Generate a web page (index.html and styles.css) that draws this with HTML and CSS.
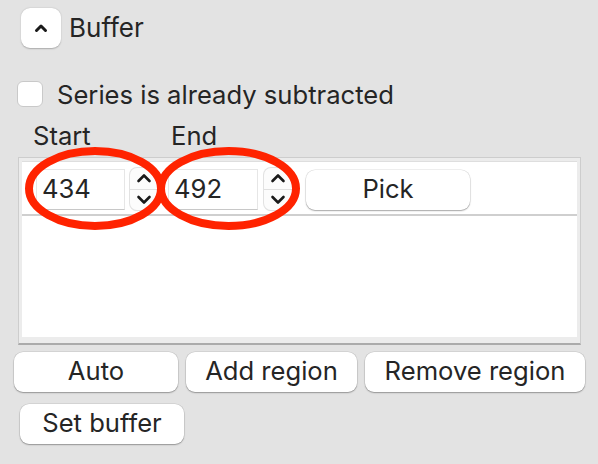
FILE: index.html
```html
<!DOCTYPE html>
<html>
<head>
<meta charset="utf-8">
<link rel="stylesheet" href="styles.css">
</head>
<body>
<div class="panel">
  <div class="header">
    <button class="collapse"><svg width="14" height="10" viewBox="0 0 14 10"><path d="M2.5 7.5 L7 3 L11.5 7.5" fill="none" stroke="#1a1a1a" stroke-width="3" stroke-linecap="round" stroke-linejoin="round"/></svg></button>
    <span class="title">Buffer</span>
  </div>
  <label class="check-row">
    <span class="checkbox"></span>
    <span>Series is already subtracted</span>
  </label>
  <div class="col-labels">
    <span class="lbl-start">Start</span>
    <span class="lbl-end">End</span>
  </div>
  <div class="frame">
    <div class="list">
      <div class="row">
        <div class="spin first">
          <div class="field f1">434</div>
          <div class="stepper s1">
            <svg width="16" height="10" viewBox="0 0 16 10"><path d="M2.5 8 L8 2.5 L13.5 8" fill="none" stroke="#1a1a1a" stroke-width="2.6" stroke-linecap="round" stroke-linejoin="round"/></svg>
            <div class="step-div"></div>
            <svg width="16" height="10" viewBox="0 0 16 10"><path d="M2.5 2 L8 7.5 L13.5 2" fill="none" stroke="#1a1a1a" stroke-width="2.6" stroke-linecap="round" stroke-linejoin="round"/></svg>
          </div>
        </div>
        <div class="spin second">
          <div class="field f2">492</div>
          <div class="stepper s2">
            <svg width="16" height="10" viewBox="0 0 16 10"><path d="M2.5 8 L8 2.5 L13.5 8" fill="none" stroke="#1a1a1a" stroke-width="2.6" stroke-linecap="round" stroke-linejoin="round"/></svg>
            <div class="step-div"></div>
            <svg width="16" height="10" viewBox="0 0 16 10"><path d="M2.5 2 L8 7.5 L13.5 2" fill="none" stroke="#1a1a1a" stroke-width="2.6" stroke-linecap="round" stroke-linejoin="round"/></svg>
          </div>
        </div>
        <button class="btn pick">Pick</button>
      </div>
    </div>
  </div>
  <div class="btn-row first">
    <button class="btn w-auto">Auto</button>
    <button class="btn w-add">Add region</button>
    <button class="btn w-remove">Remove region</button>
  </div>
  <div class="btn-row second">
    <button class="btn w-set">Set buffer</button>
  </div>
</div>
<svg class="annot" width="598" height="464" viewBox="0 0 598 464">
  <ellipse cx="95" cy="188.5" rx="66" ry="37.5" fill="none" stroke="#ff2300" stroke-width="8"/>
  <ellipse cx="228.5" cy="188.5" rx="67.5" ry="37.5" fill="none" stroke="#ff2300" stroke-width="8"/>
</svg>
</body>
</html>
```
FILE: styles.css
```css
html, body {
  margin: 0;
  padding: 0;
}
body {
  background: #e3e3e3;
  width: 598px;
  height: 464px;
  overflow: hidden;
  position: relative;
  font-family: "Inter", "Liberation Sans", sans-serif;
  font-size: 25.6px;
  color: #252525;
}
.panel {
  display: flex;
  flex-direction: column;
}
.header {
  display: flex;
  align-items: center;
  gap: 8px;
  padding: 8px 0 0 21px;
  height: 40px;
}
.collapse {
  width: 40px;
  height: 40px;
  border: none;
  border-radius: 9px;
  background: #fff;
  box-shadow: 0 0.5px 1.5px rgba(0,0,0,0.25);
  display: flex;
  align-items: center;
  justify-content: center;
  padding: 0;
}
.title {
  font-size: 26px;
  margin-bottom: 1px;
}
.check-row {
  display: flex;
  align-items: center;
  gap: 14px;
  margin-top: 32px;
  padding-left: 17px;
  height: 28px;
}
.checkbox {
  width: 26px;
  height: 26px;
  border-radius: 6px;
  background: #fff;
  border: 1px solid #c9c9c9;
  box-sizing: border-box;
}
.col-labels {
  display: flex;
  margin-top: 12px;
  height: 30px;
  align-items: center;
}
.lbl-start { margin-left: 33px; width: 138px; }
.frame {
  margin: 7px 17px 0 18px;
  height: 188px;
  box-sizing: border-box;
  border: 1px solid #cdcdcd;
  border-bottom: 2px solid #ababab;
  padding: 3px 3px 6px 3px;
  background: #ececec;
}
.list {
  background: #fff;
  height: 100%;
  box-sizing: border-box;
  border-top: 1px solid #dedede;
}
.row {
  display: flex;
  align-items: center;
  height: 54px;
  box-sizing: border-box;
  border-bottom: 2px solid #cfcfcf;
  padding-left: 14px;
}
.spin {
  display: flex;
  align-items: center;
}
.spin.first { margin-right: 11px; }
.spin.second { margin-right: 14px; }
.field {
  height: 41px;
  box-sizing: border-box;
  border: 1px solid #e6e6e6;
  border-bottom: 1.5px solid #c8c8c8;
  display: flex;
  align-items: center;
  padding: 0 0 2px 5px;
  margin-top: 2px;
}
.f1 { width: 89px; margin-right: 5px; }
.f2 { width: 90px; margin-right: 6px; }
.stepper {
  height: 42px;
  box-sizing: border-box;
  border-radius: 7px;
  background: #fcfcfc;
  box-shadow: 0 0 0 1px #e2e2e2, 0 1px 1px rgba(0,0,0,0.15);
  display: flex;
  flex-direction: column;
  align-items: center;
  justify-content: space-between;
  padding: 5px 0 5px;
  margin-top: 2px;
}
.s1 { width: 27px; }
.s2 { width: 28px; }
.step-div {
  width: 100%;
  height: 1px;
  background: #e0e0e0;
}
.btn {
  font-family: inherit;
  font-size: 25.6px;
  color: #252525;
  background: #fff;
  border: none;
  border-radius: 9px;
  height: 40px;
  box-shadow: 0 0 0 0.5px rgba(0,0,0,0.12), 0 1px 1.5px rgba(0,0,0,0.3);
  padding: 0 0 3px 0;
}
.pick {
  width: 164px;
  margin-top: 4px;
}
.btn-row {
  display: flex;
  gap: 8px;
}
.btn-row.first {
  margin-top: 7px;
  padding-left: 14px;
}
.btn-row.second {
  margin-top: 12px;
  padding-left: 20px;
}
.w-auto { width: 164px; }
.w-add { width: 171px; }
.w-remove { width: 220px; }
.w-set { width: 164px; }
.annot {
  position: absolute;
  left: 0;
  top: 0;
  pointer-events: none;
}
```
